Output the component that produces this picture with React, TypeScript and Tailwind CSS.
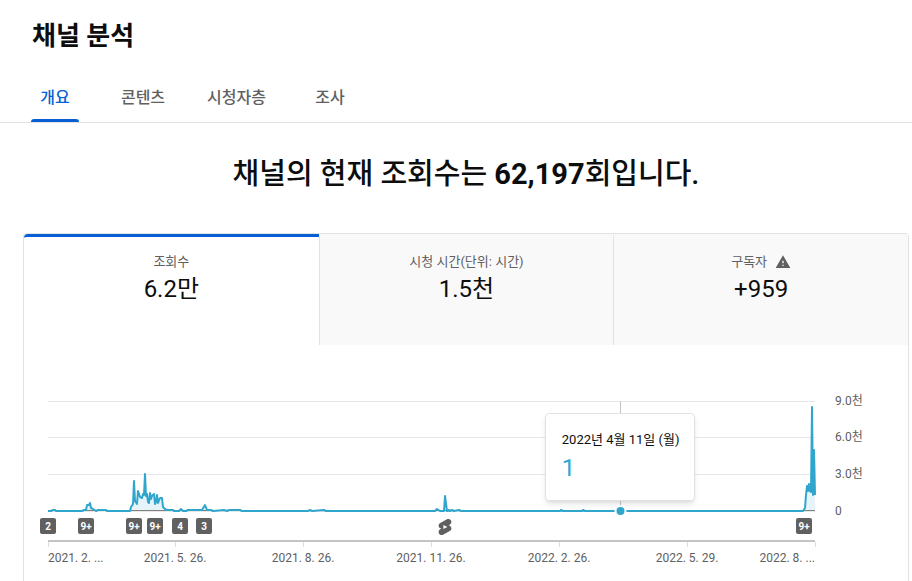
import React, { useState } from "react";

const tabs = ["개요", "콘텐츠", "시청자층", "조사"];

const metrics = [
  { id: "views", label: "조회수", value: "6.2만", warning: false },
  { id: "watch", label: "시청 시간(단위: 시간)", value: "1.5천", warning: false },
  { id: "subs", label: "구독자", value: "+959", warning: true },
];

// Plot area inside the 884 x 235 chart
const LEFT = 24;
const RIGHT = 791;
const BASE = 165;

// [distance from the left edge, height above the zero line]
const points = [
  [0, 0], [3, 0], [5, 1], [7, 1], [8, 0], [34, 0], [36, 1], [38, 1], [39, 6],
  [41, 6], [42, 8], [43, 3], [45, 2], [48, 0], [50, 1], [58, 1], [59, 0],
  [82, 0], [83, 4], [85, 7], [86, 30], [87, 10], [89, 7], [90, 20], [92, 14],
  [94, 13], [95, 17], [96, 16], [97, 37], [98, 15], [99, 17], [100, 9],
  [101, 8], [102, 18], [103, 12], [104, 15], [106, 17], [107, 7], [108, 9],
  [109, 16], [110, 8], [112, 13], [114, 13], [115, 4], [117, 2], [119, 1],
  [125, 1], [126, 0], [131, 0], [133, 2], [135, 0], [138, 0], [140, 1],
  [154, 1], [157, 6], [159, 1], [163, 1], [165, 0], [176, 1], [179, 0],
  [181, 1], [192, 1], [194, 0], [260, 0], [262, 1], [264, 0], [276, 1],
  [278, 0], [387, 0], [389, 2], [392, 0], [396, 0], [397, 15], [399, 0],
  [401, 1], [402, 0], [404, 1], [406, 0], [411, 1], [413, 0], [512, 0],
  [513, 1], [515, 0], [534, 0], [535, 1], [537, 0], [755, 0], [757, 3],
  [758, 16], [759, 25], [760, 20], [761, 27], [762, 20], [763, 19], [764, 104],
  [765, 16], [766, 61], [767, 16],
];

const line = points.map(([x, y]) => `${LEFT + x},${BASE - y}`).join(" ");
const area = `${LEFT},${BASE} ${line} ${RIGHT},${BASE}`;

const yLabels = [
  { y: 55, text: "9.0천" },
  { y: 91, text: "6.0천" },
  { y: 128, text: "3.0천" },
  { y: 165, text: "0" },
];

const xLabels = [
  { tick: 24, anchor: "start", text: "2021. 2. ..." },
  { tick: 151, anchor: "middle", text: "2021. 5. 26." },
  { tick: 279, anchor: "middle", text: "2021. 8. 26." },
  { tick: 407, anchor: "middle", text: "2021. 11. 26." },
  { tick: 535, anchor: "middle", text: "2022. 2. 26." },
  { tick: 663, anchor: "middle", text: "2022. 5. 29." },
  { tick: 791, anchor: "end", text: "2022. 8. ..." },
] as const;

const badges = [
  { x: 24, text: "2" },
  { x: 62, text: "9+" },
  { x: 110, text: "9+" },
  { x: 131, text: "9+" },
  { x: 156, text: "4" },
  { x: 180, text: "3" },
  { x: 780, text: "9+" },
];

const WarningIcon = () => (
  <svg viewBox="0 0 24 24" className="w-4 h-4 fill-[#606060]" aria-hidden="true">
    <path d="M1 21h22L12 2 1 21zm12-3h-2v-2h2v2zm0-4h-2v-4h2v4z" />
  </svg>
);

const ViewsChart = () => (
  <svg viewBox="0 0 884 235" className="block w-full" role="img" aria-label="조회수">
    {yLabels.map((l) => (
      <g key={l.text}>
        <rect x={LEFT} y={l.y} width={RIGHT - LEFT} height="1" fill="#e8e8e8" />
        <text x="811" y={l.y + 4} fontSize="12" fill="#606060">
          {l.text}
        </text>
      </g>
    ))}
    <rect x="596" y="55" width="1" height="110" fill="#c4c4c4" />
    <polygon points={area} fill="#e6f4fa" />
    <rect x={LEFT} y={BASE - 1} width={RIGHT - LEFT} height="1" fill="#808080" />
    <polyline points={line} fill="none" stroke="#30a6cd" strokeWidth="2" strokeLinejoin="round" />
    <circle cx="596.5" cy="165" r="5" fill="#30a6cd" stroke="#fff" strokeWidth="2" />

    {badges.map((b) => (
      <g key={b.x}>
        <rect x={b.x - 8} y="172" width="16" height="16" rx="2" fill="#606060" />
        <text x={b.x} y="184" fontSize="10" fontWeight="700" fill="#fff" textAnchor="middle">
          {b.text}
        </text>
      </g>
    ))}
    <g transform="translate(411.4 171.4) scale(0.8)">
      <path
        fill="#606060"
        d="M10 14.65v-5.3L15 12l-5 2.65zm7.77-4.33c-.77-.32-1.2-.5-1.2-.5L18 9.06c1.84-.96 2.53-3.23 1.56-5.06s-3.24-2.53-5.07-1.56L6 6.94c-1.29.68-2.07 2.04-2 3.49.07 1.42.93 2.67 2.22 3.25.03.01 1.2.5 1.2.5L6 14.93c-1.83.97-2.53 3.24-1.56 5.07.97 1.83 3.24 2.53 5.07 1.56l8.5-4.5c1.29-.68 2.06-2.04 1.99-3.49-.07-1.42-.94-2.68-2.23-3.25z"
      />
    </g>

    <rect x={LEFT} y="194" width={RIGHT - LEFT} height="2" fill="#c4c4c4" />
    {xLabels.map((l) => (
      <g key={l.text}>
        <rect x={l.tick} y="196" width="1" height="5" fill="#dcdcdc" />
        <text x={l.tick} y="216" fontSize="12" fill="#606060" textAnchor={l.anchor}>
          {l.text}
        </text>
      </g>
    ))}
  </svg>
);

const App: React.FC = () => {
  const [tab, setTab] = useState("개요");
  const [metric, setMetric] = useState("views");

  return (
    <div className="min-h-screen bg-white text-[#0d0d0d] font-[Roboto,'Noto_Sans_CJK_KR',sans-serif]">
      <header className="border-b border-[#e2e2e2]">
        <h1 className="px-8 pt-[18px] text-[26px] leading-9 font-bold">채널 분석</h1>
        <nav className="flex gap-10 px-[31px] pt-[18px]">
          {tabs.map((t) => (
            <button
              key={t}
              onClick={() => setTab(t)}
              className={`flex flex-col items-center min-w-12 text-base font-medium cursor-pointer ${
                tab === t ? "text-[#065fd4]" : "text-[#606060]"
              }`}
            >
              <span className="h-[47px] leading-[52px]">{t}</span>
              <span className={`h-[3px] w-full rounded-t-sm ${tab === t ? "bg-[#065fd4]" : ""}`} />
            </button>
          ))}
        </nav>
      </header>

      <main className="pl-[23px] pr-[3px]">
        <h2 className="pt-[30px] pb-[38px] text-center text-[29px] leading-[42px] font-medium">
          채널의 현재 조회수는 <strong className="font-bold">62,197</strong>회입니다.
        </h2>

        <section className="rounded-t border border-b-0 border-[#e2e2e2]">
          {/* Metric tabs */}
          <div className="grid grid-cols-3 mb-px">
            {metrics.map((m, i) => (
              <button
                key={m.id}
                onClick={() => setMetric(m.id)}
                className={`flex flex-col items-center h-[111px] pt-[15px] border-t-[3px] cursor-pointer ${
                  i > 0 ? "border-l border-l-[#e2e2e2]" : "rounded-tl"
                } ${metric === m.id ? "border-t-[#065fd4] bg-white" : "border-t-[#f9f9f9] bg-[#f9f9f9]"}`}
              >
                <span className="flex items-center gap-2 text-[13px] leading-5 text-[#606060]">
                  {m.label}
                  {m.warning && <WarningIcon />}
                </span>
                <span className="text-2xl leading-[34px]">{m.value}</span>
              </button>
            ))}
          </div>

          {/* Chart */}
          <div className="relative">
            <ViewsChart />
            <div className="absolute top-[67px] left-[67.4%] -translate-x-1/2 w-[150px] h-[88px] px-4 pt-4 bg-white border border-[#e2e2e2] rounded shadow-md">
              <div className="text-[13px] leading-5 whitespace-nowrap">2022년 4월 11일 (월)</div>
              <div className="text-2xl leading-9 text-[#30a6cd]">1</div>
            </div>
          </div>
        </section>
      </main>
    </div>
  );
};

export default App;
